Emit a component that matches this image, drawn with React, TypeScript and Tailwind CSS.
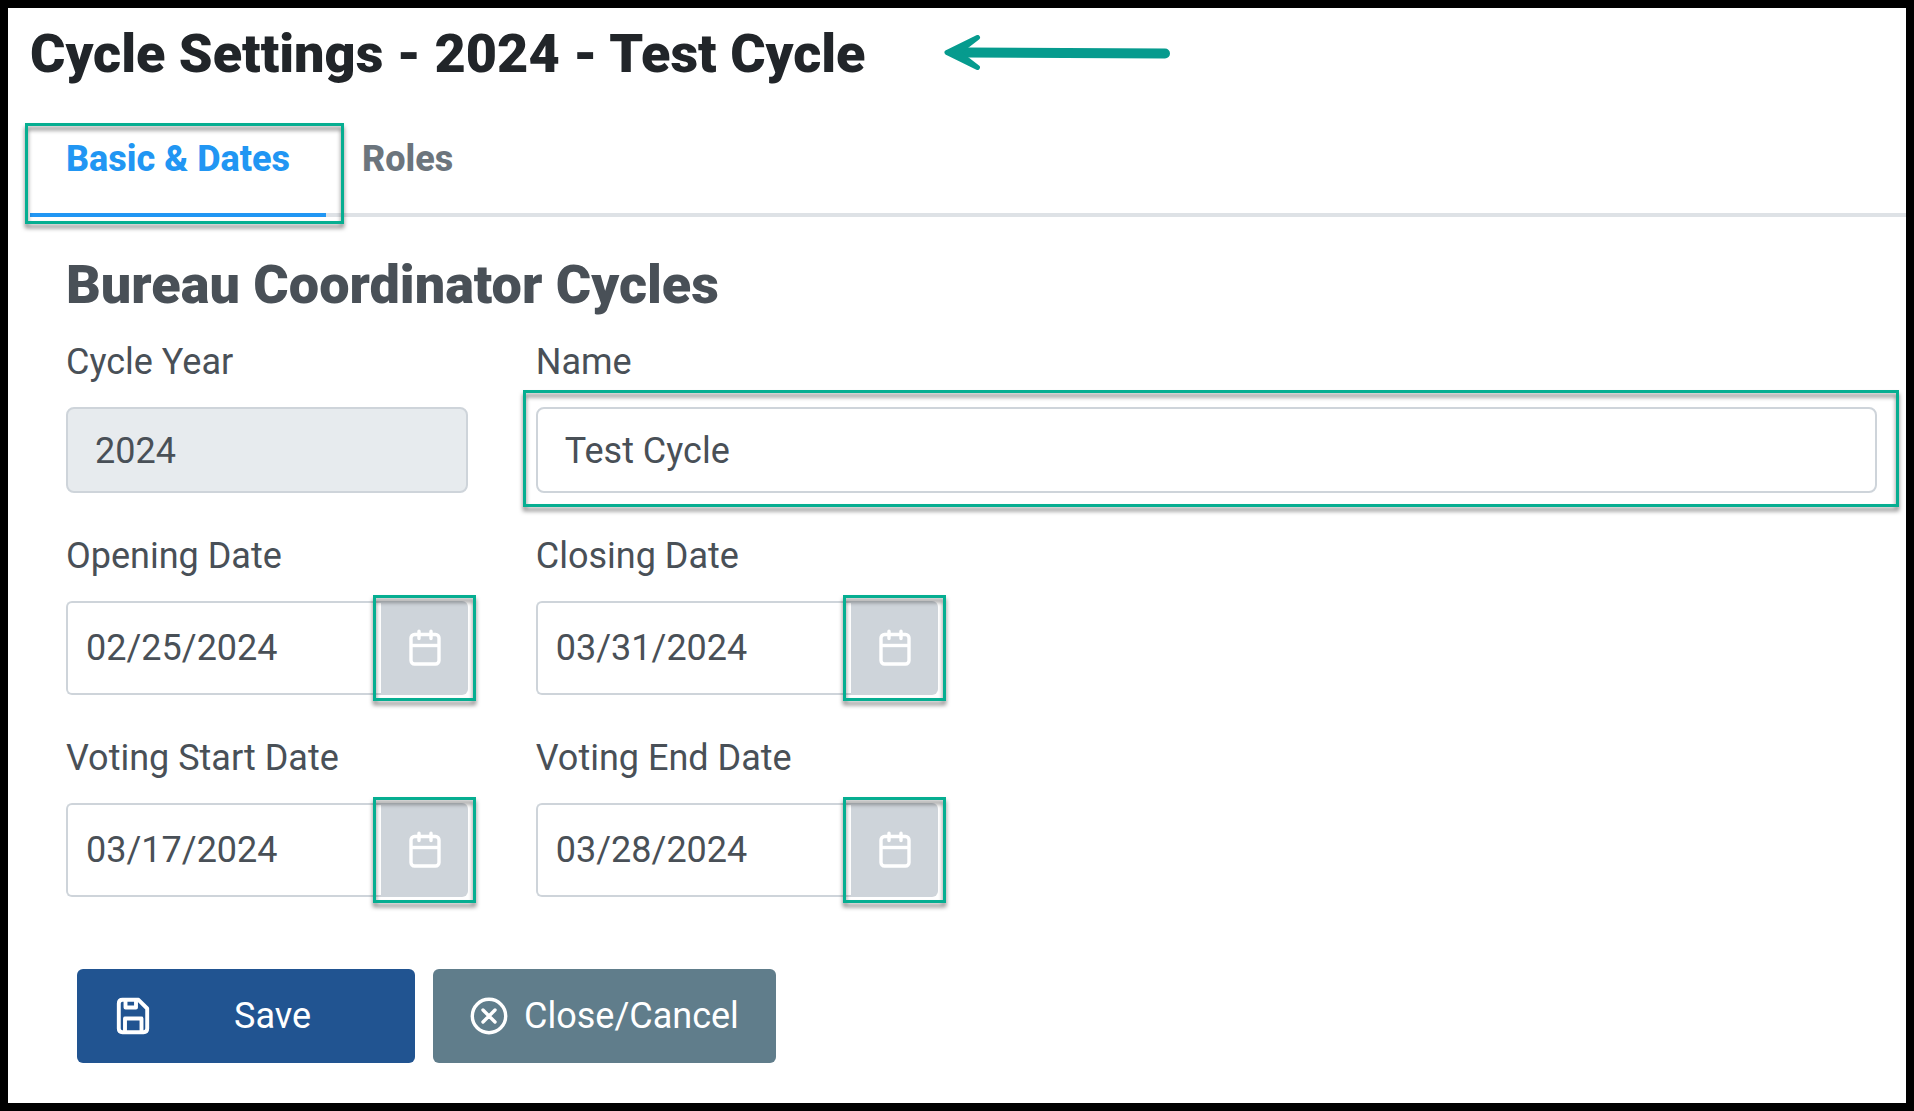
import React from 'react';

// Green callout frame drawn over the element it sits in
const Highlight: React.FC<{ className: string }> = ({ className }) => (
  <span
    aria-hidden="true"
    className={`pointer-events-none absolute border-3 border-[#06ae91] drop-shadow-[0_4px_2px_rgba(0,0,0,0.5)] ${className}`}
  />
);

const CalendarIcon: React.FC = () => (
  <svg width="34" height="38" viewBox="-2 0.5 34 38" fill="none" stroke="currentColor" strokeWidth="3.4" strokeLinecap="round" aria-hidden="true">
    <rect x="2" y="6" width="28" height="29.5" rx="3.5" />
    <path d="M2 17H30" strokeLinecap="butt" />
    <path d="M10 2.7V10M22 2.7V10" />
  </svg>
);

const SaveIcon: React.FC = () => (
  <svg width="34" height="38" viewBox="0 0 34 38" fill="none" stroke="currentColor" strokeWidth="3.9" strokeLinejoin="round" aria-hidden="true">
    <path d="M6.5 2.8H22.5L31.2 11.5V31.5Q31.2 35.2 27.5 35.2H6.5Q2.8 35.2 2.8 31.5V6.5Q2.8 2.8 6.5 2.8Z" />
    <path d="M9.500 3V10.500H20V3" />
    <path d="M9 35V21.500H25.500V35" />
  </svg>
);

const CloseIcon: React.FC = () => (
  <svg width="38" height="38" viewBox="0 0 38 38" fill="none" stroke="currentColor" strokeWidth="3.4" strokeLinecap="round" aria-hidden="true">
    <circle cx="19" cy="19" r="16.7" />
    <path d="M13 13L25 25M25 13L13 25" />
  </svg>
);

const Arrow: React.FC = () => (
  <svg width="226" height="38" viewBox="0 1.5 226 38" fill="none" stroke="#069b8e" strokeLinecap="round" strokeLinejoin="round" aria-hidden="true">
    <path d="M22 19L221 20" strokeWidth="10" />
    <path d="M33.500 4L3 19L33.500 34L14 19Z" fill="#069b8e" strokeWidth="5" />
  </svg>
);

interface DateFieldProps {
  id: string;
  label: string;
  value: string;
}

const DateField: React.FC<DateFieldProps> = ({ id, label, value }) => {
  return (
    <div className="flex flex-col gap-[23px]">
      <label htmlFor={id}>{label}</label>
      <div className="flex h-[94px]">
        <input
          id={id}
          type="text"
          defaultValue={value}
          className="min-w-0 flex-1 rounded-l-md border-2 border-r-0 border-[#ced4da] bg-white px-[18px]"
        />
        <div className="relative">
          <button
            type="button"
            aria-label={`Choose ${label}`}
            className="flex h-full w-[87px] items-center justify-center rounded-r-md bg-[#ced4da] text-white"
          >
            <CalendarIcon />
          </button>
          <Highlight className="-inset-x-2 -inset-y-1.5" />
        </div>
      </div>
    </div>
  );
};

export default function App() {
  return (
    <main className="min-h-screen border-8 border-black bg-white font-[Roboto,sans-serif] text-[36px] leading-[44px] text-[#495057]">
      <header className="flex items-center gap-[78px] px-[22px] pt-[14px]">
        <h1 className="text-[54px] leading-[64px] font-black text-[#212529]">
          Cycle Settings - 2024 - Test Cycle
        </h1>
        <Arrow />
      </header>

      {/* Tabs */}
      <nav className="mt-[39px] ml-[22px] flex border-b-4 border-[#dee2e6] font-extrabold">
        <a href="#basic" aria-current="page" className="relative -mb-1 border-b-4 border-[#2196f3] px-9 pt-3 pb-8 text-[#2196f3]">
          Basic &amp; Dates
          <Highlight className="-top-0.5 -right-[18px] -bottom-[11px] -left-[5px]" />
        </a>
        <a href="#roles" className="px-9 pt-3 pb-8 text-[#6c757d]">
          Roles
        </a>
      </nav>

      <form className="pt-9 pr-[29px] pb-10 pl-[58px]">
        <h2 className="mb-[23px] text-[54px] leading-[64px] font-black">Bureau Coordinator Cycles</h2>

        <div className="grid grid-cols-4 gap-x-[68px] gap-y-[41px]">
          <div className="flex flex-col gap-[23px]">
            <label htmlFor="year">Cycle Year</label>
            <input
              id="year"
              type="text"
              readOnly
              value="2024"
              className="h-[86px] w-full rounded-lg border-2 border-[#ced4da] bg-[#e7ebee] px-[27px] pt-0.5"
            />
          </div>
          <div className="col-span-3 flex flex-col gap-[23px]">
            <label htmlFor="name">Name</label>
            <div className="relative">
              <input
                id="name"
                type="text"
                defaultValue="Test Cycle"
                className="block h-[86px] w-full rounded-lg border-2 border-[#ced4da] bg-white px-[27px] pt-0.5"
              />
              <Highlight className="-top-[17px] -right-[22px] -bottom-3.5 -left-[13px]" />
            </div>
          </div>

          <DateField id="opening" label="Opening Date" value="02/25/2024" />
          <DateField id="closing" label="Closing Date" value="03/31/2024" />
          <div className="col-start-1">
            <DateField id="voting-start" label="Voting Start Date" value="03/17/2024" />
          </div>
          <DateField id="voting-end" label="Voting End Date" value="03/28/2024" />
        </div>

        <div className="mt-[72px] ml-[11px] flex gap-[18px] text-white">
          <button type="button" className="flex h-[94px] w-[338px] items-center rounded-md bg-[#215491] pr-5 pl-[39px]">
            <SaveIcon />
            <span className="flex-1 text-center">Save</span>
          </button>
          <button type="button" className="flex h-[94px] items-center gap-4 rounded-md bg-[#607d8b] px-[37px]">
            <CloseIcon />
            Close/Cancel
          </button>
        </div>
      </form>
    </main>
  );
}
